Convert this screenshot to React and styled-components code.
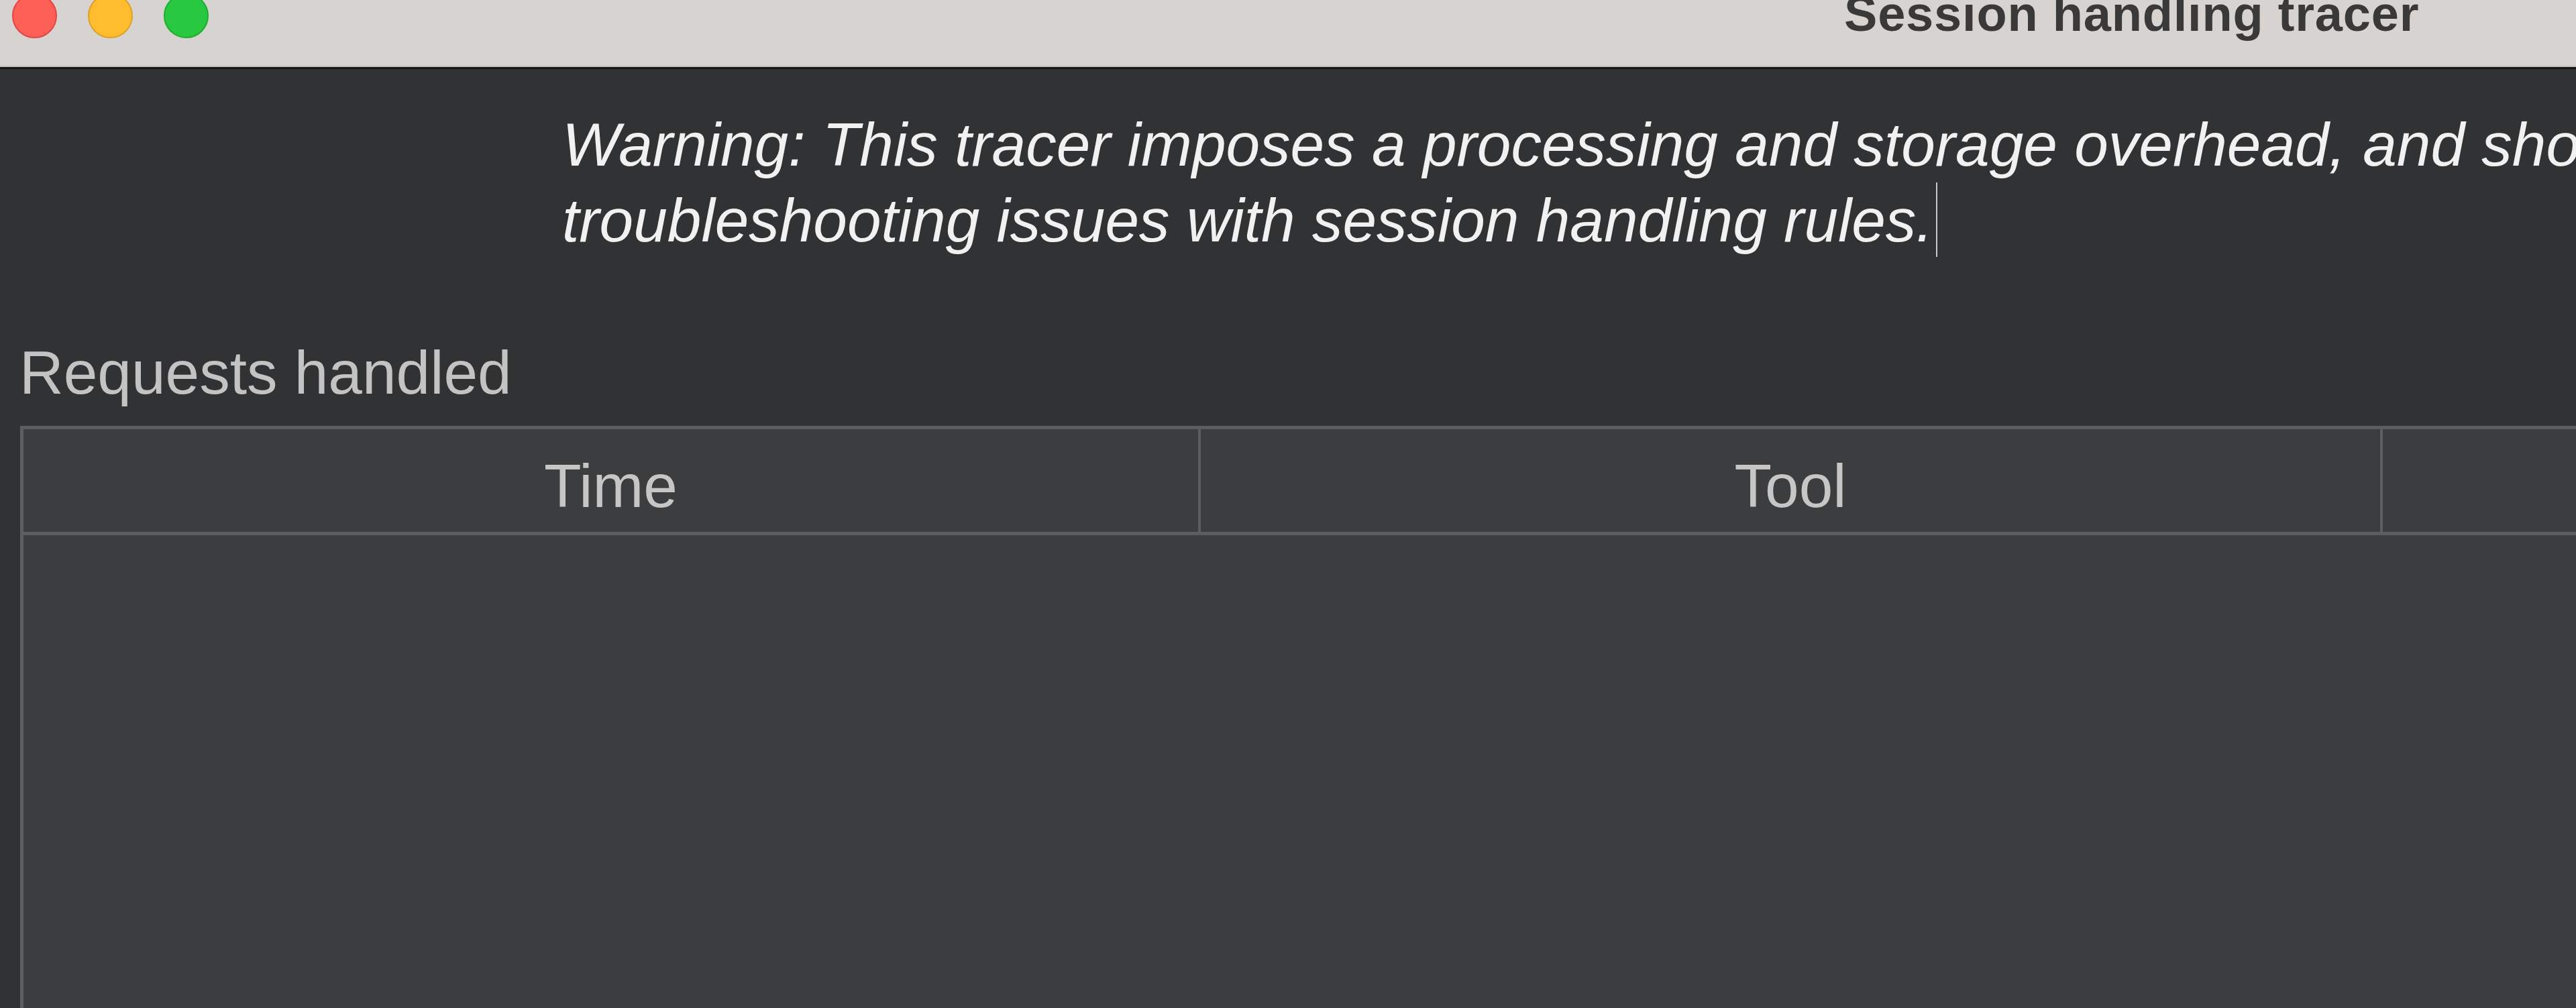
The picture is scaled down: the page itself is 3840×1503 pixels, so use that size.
import React from 'react';
import styled, { createGlobalStyle } from 'styled-components';

const Global = createGlobalStyle`
  html, body {
    margin: 0;
    padding: 0;
    width: 3840px;
    height: 1503px;
    overflow: hidden;
    background: #313234;
  }
  #root {
    width: 3840px;
    height: 1503px;
  }
`;

const Window = styled.div`
  display: flex;
  flex-direction: column;
  width: 3840px;
  height: 1503px;
  overflow: hidden;
  background: #313234;
  font-family: "Liberation Sans", Arial, Helvetica, sans-serif;
`;

const TitleBar = styled.header`
  flex: 0 0 auto;
  height: 100px;
  box-sizing: content-box;
  background: #d7d3d0;
  border-bottom: 3px solid #141414;
  box-shadow: inset 0 -2px 0 #c2beba;
  display: flex;
  align-items: flex-start;
  padding-left: 18px;
  white-space: nowrap;
`;

const Lights = styled.div`
  display: flex;
  gap: 46px;
  margin-top: -10px;
`;

const Light = styled.span`
  display: block;
  width: 67px;
  height: 67px;
  border-radius: 50%;
  box-sizing: border-box;
  background: ${(p) => p.$fill};
  border: 2px solid ${(p) => p.$edge};
`;

const Title = styled.h1`
  margin: -16px 0 0 2438px;
  font-family: "Liberation Sans", Arial, sans-serif;
  font-weight: 700;
  font-size: 74px;
  line-height: 74px;
  letter-spacing: 0.8px;
  color: #3a3939;
`;

const Content = styled.main`
  flex: 1 1 auto;
  display: flex;
  flex-direction: column;
  min-height: 0;
`;

const Warning = styled.p`
  margin: 56px 0 0 0;
  padding-left: 838px;
  font-style: italic;
  font-size: 91px;
  line-height: 113px;
  color: #f1f1f1;
  white-space: nowrap;
`;

const Caret = styled.span`
  display: inline-block;
  width: 2px;
  height: 111px;
  margin-left: 4px;
  vertical-align: top;
  background: #c9c9c9;
`;

const SectionLabel = styled.h2`
  margin: 114px 0 0 0;
  padding-left: 29px;
  font-weight: 400;
  font-size: 91px;
  line-height: 113px;
  color: #c3c3c3;
`;

const Table = styled.section`
  flex: 1 1 auto;
  margin: 23px 0 0 30px;
  width: 6000px;
  background: #3c3d3f;
  border-top: 5px solid #5d5e60;
  border-left: 5px solid #5d5e60;
  display: flex;
  flex-direction: column;
`;

const HeaderRow = styled.div`
  display: flex;
  height: 153px;
  border-bottom: 5px solid #5d5e60;
`;

const HeaderCell = styled.div`
  flex: 0 0 auto;
  width: ${(p) => p.$width}px;
  box-sizing: border-box;
  border-right: 4px solid #5d5e60;
  padding-top: 28px;
  text-align: center;
  font-size: 91px;
  line-height: 113px;
  color: #c6c6c6;
`;

const Body = styled.div`
  flex: 1 1 auto;
`;

const columns = [
  { key: 'time', label: 'Time', width: 1755 },
  { key: 'tool', label: 'Tool', width: 1762 },
  { key: 'url', label: 'URL', width: 1762 },
];

export default function App() {
  return (
    <>
      <Global />
      <Window>
        <TitleBar>
          <Lights>
            <Light $fill="#fe5f57" $edge="#e1463f" />
            <Light $fill="#febc2e" $edge="#dfa123" />
            <Light $fill="#28c840" $edge="#1dac2c" />
          </Lights>
          <Title>Session handling tracer</Title>
        </TitleBar>
        <Content>
          <Warning>
            Warning: This tracer imposes a processing and storage overhead, and should only be used when
            <br />
            troubleshooting issues with session handling rules.
            <Caret />
          </Warning>
          <SectionLabel>Requests handled</SectionLabel>
          <Table>
            <HeaderRow>
              {columns.map((c) => (
                <HeaderCell key={c.key} $width={c.width}>
                  {c.label}
                </HeaderCell>
              ))}
            </HeaderRow>
            <Body />
          </Table>
        </Content>
      </Window>
    </>
  );
}
